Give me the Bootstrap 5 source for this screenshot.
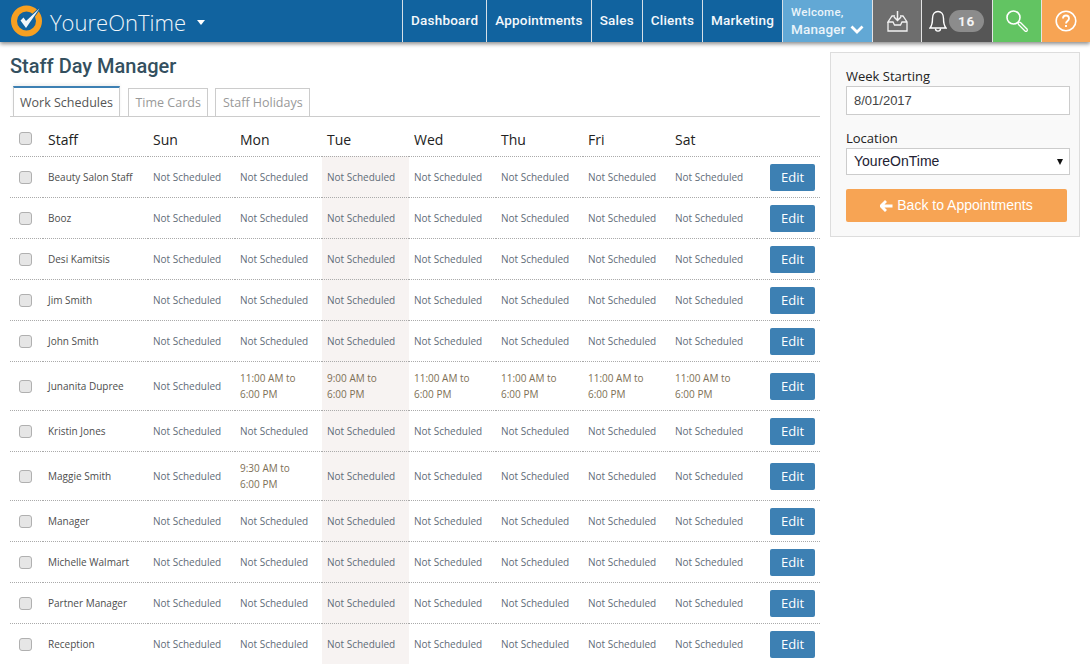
<!DOCTYPE html>
<html lang="en">
<head>
<meta charset="utf-8">
<title>Staff Day Manager</title>
<link href="https://cdn.jsdelivr.net/npm/bootstrap@5.3.0/dist/css/bootstrap.min.css" rel="stylesheet">
<style>
html,body{height:664px;overflow:hidden;}
body{font-family:"Open Sans",sans-serif;background:#fff;color:#333;}
.topbar{height:42px;background:#11639f;box-shadow:0 2px 4px rgba(0,0,0,.45);position:relative;z-index:2;}
.brand-logo{margin-left:9px;margin-right:5px;}
.brand-name{font-family:"Open Sans",sans-serif;font-weight:300;font-size:22px;color:#f0f6fa;line-height:42px;padding-top:1px;}
.brand-caret{border-left:4.5px solid transparent;border-right:4.5px solid transparent;border-top:5px solid #fff;margin-left:11px;margin-top:2px;}
.tb-link{font-family:"Roboto",sans-serif;font-weight:500;font-size:13.5px;letter-spacing:.2px;color:#f4f8fb;border-left:1px solid #d5e0e8;height:42px;line-height:40px;padding:0 8px;text-decoration:none;}
.tb-welcome{width:90px;background:#62a8d5;border-left:1px solid #d5e0e8;color:#eaf4fa;font-family:"Roboto",sans-serif;font-weight:500;line-height:1;padding:7px 0 0 8px;}
.tb-welcome .w1{font-size:11.5px;letter-spacing:.3px;}
.tb-welcome .w2{font-size:13.5px;letter-spacing:.15px;margin-top:4px;}
.tb-cell{height:42px;border-left:1px solid #e4e4e4;}
.tb-inbox{width:49px;background:#6e6e6e;}
.tb-bell{width:71px;background:#565656;padding-left:7px;gap:2px;}
.tb-search{width:49px;background:#62c462;}
.tb-help{width:49px;background:#f7a454;}
.bell-count{background:#8c8c8c;color:#f4f4f4;font-family:"Roboto",sans-serif;font-weight:700;font-size:13.5px;letter-spacing:.8px;width:35px;height:22px;line-height:22px;border-radius:11px;text-align:center;}
.page-title{font-family:"Roboto",sans-serif;font-size:20px;font-weight:500;color:#34505f;line-height:27px;margin:0;}
.main-col{width:810px;padding-top:11px;margin-left:10px;}
.side-col{width:250px;margin-left:10px;margin-top:10px;}
.tabs-bar{height:31px;margin-top:6px;border-bottom:1px solid #ccc;padding-left:3px;}
.tab-item{display:block;font-size:12.5px;color:#999;border:1px solid #ccc;border-bottom:0;height:28px;line-height:27px;padding:0 6.5px;margin-right:7px;margin-top:2px;text-decoration:none;background:#fff;}
.tab-item.on{color:#555;height:30px;line-height:30px;padding:0 6px;margin-top:0;border-top:2px solid #3d80b3;margin-bottom:-1px;margin-right:8px;box-shadow:0 -2px 3px rgba(0,0,0,.06);}
.sched{width:810px;table-layout:fixed;border-collapse:collapse;margin:0;}
.sched th,.sched td{padding:1px 5px 0;border-bottom:1px dotted #aaa;vertical-align:middle;}
.sched th{height:39px;padding-top:6px;font-size:14px;font-weight:400;color:#222;}
.sched td{height:41px;font-size:10px;line-height:16px;color:#5f6c78;}
.sched tr.taller td{height:49px;}
.sched td.who{color:#4d4d4d;}
.sched .now{background:#f7f3f2;}
.sched td.hrs{color:#7d6f55;}
.c1{width:33px;}
.c2{width:105px;}
.c3{width:87px;}
.tick{display:block;width:13px;height:13px;margin:0 0 0 4px;background:#e6e6e6;border:1px solid #b0b0b0;border-radius:3px;appearance:none;}
th .tick{margin-top:-1px;}
.edit-btn{display:block;width:45px;height:27px;line-height:27px;padding:0;margin:1px 0 0 8px;background:#3d80b3;color:#fff;border:0;border-radius:2px;font-family:"Open Sans",sans-serif;font-size:13px;}
.panel{height:185px;background:#f9f9f9;border:1px solid #ddd;padding:14px 15px 15px;}
.panel label{display:block;font-size:13px;color:#222;line-height:18px;margin:0;}
.field{display:block;width:224px;background:#fff;border:1px solid #ccc;border-radius:0;font-family:"Liberation Sans",sans-serif;font-size:14px;color:#444;}
.field-in{height:29px;line-height:27px;padding:0 7px;margin-top:1px;margin-bottom:14px;font-size:13px;}
.field-sel{height:27px;line-height:25px;padding:0 6px 0 7px;color:#223;display:flex;justify-content:space-between;align-items:center;margin-top:1px;}
.sel-arrow{border-left:3.500px solid transparent;border-right:3.500px solid transparent;border-top:6px solid #111;}
.back-btn{display:block;width:221px;height:33px;margin-top:14px;padding:0;background:#f7a454;color:#fff;border:0;border-radius:2px;font-family:"Liberation Sans",sans-serif;font-size:14px;}
</style>
</head>
<body>
<header class="topbar d-flex align-items-stretch">
  <div class="d-flex align-items-center flex-grow-1">
    <svg class="brand-logo" width="36" height="36" viewBox="0 0 36 36">
      <circle cx="17.500" cy="18" r="12.500" fill="none" stroke="#f7a021" stroke-width="6"/>
      <path d="M11.500 17.500L14.500 14.500L17 18L30.500 5.500L17 25Z" fill="#11639f" stroke="#11639f" stroke-width="2"/>
      <path d="M11.500 17.500L14.500 14.500L17 18L30.500 5.500L17 25Z" fill="#f2f6f9"/>
    </svg>
    <span class="brand-name">YoureOnTime</span>
    <span class="brand-caret"></span>
  </div>
  <a class="tb-link" href="#">Dashboard</a>
  <a class="tb-link" href="#">Appointments</a>
  <a class="tb-link" href="#">Sales</a>
  <a class="tb-link" href="#">Clients</a>
  <a class="tb-link" href="#">Marketing</a>
  <div class="tb-welcome">
    <div class="w1">Welcome,</div>
    <div class="w2 d-flex align-items-center">Manager
      <svg class="ms-1" width="14" height="9" viewBox="0 0 14 9"><path d="M1.500 1.500L7 7l5.500-5.500" fill="none" stroke="#fff" stroke-width="2.800"/></svg>
    </div>
  </div>
  <div class="tb-cell tb-inbox d-flex align-items-center justify-content-center">
    <svg width="21" height="22" viewBox="0 0 21 22" fill="none" stroke="#f2f2f2" stroke-width="1.300">
      <path d="M1 12v9h19v-9l-4-6h-3M8 6H5l-4 6h5l1.500 3h6l1.500-3h5"/>
      <path d="M10.500 1v9.500M7 7l3.500 3.500L14 7" stroke-width="1.500"/>
    </svg>
  </div>
  <div class="tb-cell tb-bell d-flex align-items-center">
    <svg width="18" height="23" viewBox="0 0 18 23" fill="none" stroke="#fff" stroke-width="1.400">
      <path d="M1 18c2.500-3 2.500-6 2.500-9.500C3.500 4 6 1.500 9 1.500s5.500 2.500 5.500 7c0 3.500 0 6.500 2.500 9.500z"/>
      <path d="M6.500 18.500c0 3.500 5 3.500 5 0"/>
    </svg>
    <span class="bell-count">16</span>
  </div>
  <div class="tb-cell tb-search d-flex align-items-center justify-content-center">
    <svg width="24" height="24" viewBox="0 0 24 24" fill="none">
      <circle cx="8.500" cy="8.500" r="6.500" stroke="#fff" stroke-width="1.600"/>
      <path d="M14.500 14.500l6.500 6.500" stroke="#fff" stroke-width="4" stroke-linecap="round"/>
      <path d="M14.500 14.500l6.500 6.500" stroke="#62c462" stroke-width="1.500" stroke-linecap="round"/>
    </svg>
  </div>
  <div class="tb-cell tb-help d-flex align-items-center justify-content-center">
    <svg width="22" height="22" viewBox="0 0 22 22" fill="none" stroke="#fff" stroke-width="1.600">
      <circle cx="11" cy="11" r="9.800"/>
      <path d="M8 8.500c0-4 6-4 6 0 0 2.500-3 2.500-3 5" stroke-width="1.800"/>
      <path d="M11 15v2" stroke-width="1.900"/>
    </svg>
  </div>
</header>

<div class="d-flex">
  <main class="main-col">
    <h1 class="page-title">Staff Day Manager</h1>
    <nav class="tabs-bar d-flex align-items-start">
      <a class="tab-item on" href="#">Work Schedules</a>
      <a class="tab-item" href="#">Time Cards</a>
      <a class="tab-item" href="#">Staff Holidays</a>
    </nav>
    <table class="sched">
      <colgroup><col class="c1"><col class="c2"><col class="c3"><col class="c3"><col class="c3"><col class="c3"><col class="c3"><col class="c3"><col class="c3"><col></colgroup>
      <thead><tr><th><input class="tick" type="checkbox"></th><th>Staff</th><th>Sun</th><th>Mon</th><th>Tue</th><th>Wed</th><th>Thu</th><th>Fri</th><th>Sat</th><th></th></tr></thead>
      <tbody>
        <tr><td><input class="tick" type="checkbox"></td><td class="who">Beauty Salon Staff</td><td>Not Scheduled</td><td>Not Scheduled</td><td class="now">Not Scheduled</td><td>Not Scheduled</td><td>Not Scheduled</td><td>Not Scheduled</td><td>Not Scheduled</td><td><button class="edit-btn" type="button">Edit</button></td></tr>
        <tr><td><input class="tick" type="checkbox"></td><td class="who">Booz</td><td>Not Scheduled</td><td>Not Scheduled</td><td class="now">Not Scheduled</td><td>Not Scheduled</td><td>Not Scheduled</td><td>Not Scheduled</td><td>Not Scheduled</td><td><button class="edit-btn" type="button">Edit</button></td></tr>
        <tr><td><input class="tick" type="checkbox"></td><td class="who">Desi Kamitsis</td><td>Not Scheduled</td><td>Not Scheduled</td><td class="now">Not Scheduled</td><td>Not Scheduled</td><td>Not Scheduled</td><td>Not Scheduled</td><td>Not Scheduled</td><td><button class="edit-btn" type="button">Edit</button></td></tr>
        <tr><td><input class="tick" type="checkbox"></td><td class="who">Jim Smith</td><td>Not Scheduled</td><td>Not Scheduled</td><td class="now">Not Scheduled</td><td>Not Scheduled</td><td>Not Scheduled</td><td>Not Scheduled</td><td>Not Scheduled</td><td><button class="edit-btn" type="button">Edit</button></td></tr>
        <tr><td><input class="tick" type="checkbox"></td><td class="who">John Smith</td><td>Not Scheduled</td><td>Not Scheduled</td><td class="now">Not Scheduled</td><td>Not Scheduled</td><td>Not Scheduled</td><td>Not Scheduled</td><td>Not Scheduled</td><td><button class="edit-btn" type="button">Edit</button></td></tr>
        <tr class="taller"><td><input class="tick" type="checkbox"></td><td class="who">Junanita Dupree</td><td>Not Scheduled</td><td class="hrs">11:00 AM to<br>6:00 PM</td><td class="now hrs">9:00 AM to<br>6:00 PM</td><td class="hrs">11:00 AM to<br>6:00 PM</td><td class="hrs">11:00 AM to<br>6:00 PM</td><td class="hrs">11:00 AM to<br>6:00 PM</td><td class="hrs">11:00 AM to<br>6:00 PM</td><td><button class="edit-btn" type="button">Edit</button></td></tr>
        <tr><td><input class="tick" type="checkbox"></td><td class="who">Kristin Jones</td><td>Not Scheduled</td><td>Not Scheduled</td><td class="now">Not Scheduled</td><td>Not Scheduled</td><td>Not Scheduled</td><td>Not Scheduled</td><td>Not Scheduled</td><td><button class="edit-btn" type="button">Edit</button></td></tr>
        <tr class="taller"><td><input class="tick" type="checkbox"></td><td class="who">Maggie Smith</td><td>Not Scheduled</td><td class="hrs">9:30 AM to<br>6:00 PM</td><td class="now">Not Scheduled</td><td>Not Scheduled</td><td>Not Scheduled</td><td>Not Scheduled</td><td>Not Scheduled</td><td><button class="edit-btn" type="button">Edit</button></td></tr>
        <tr><td><input class="tick" type="checkbox"></td><td class="who">Manager</td><td>Not Scheduled</td><td>Not Scheduled</td><td class="now">Not Scheduled</td><td>Not Scheduled</td><td>Not Scheduled</td><td>Not Scheduled</td><td>Not Scheduled</td><td><button class="edit-btn" type="button">Edit</button></td></tr>
        <tr><td><input class="tick" type="checkbox"></td><td class="who">Michelle Walmart</td><td>Not Scheduled</td><td>Not Scheduled</td><td class="now">Not Scheduled</td><td>Not Scheduled</td><td>Not Scheduled</td><td>Not Scheduled</td><td>Not Scheduled</td><td><button class="edit-btn" type="button">Edit</button></td></tr>
        <tr><td><input class="tick" type="checkbox"></td><td class="who">Partner Manager</td><td>Not Scheduled</td><td>Not Scheduled</td><td class="now">Not Scheduled</td><td>Not Scheduled</td><td>Not Scheduled</td><td>Not Scheduled</td><td>Not Scheduled</td><td><button class="edit-btn" type="button">Edit</button></td></tr>
        <tr><td><input class="tick" type="checkbox"></td><td class="who">Reception</td><td>Not Scheduled</td><td>Not Scheduled</td><td class="now">Not Scheduled</td><td>Not Scheduled</td><td>Not Scheduled</td><td>Not Scheduled</td><td>Not Scheduled</td><td><button class="edit-btn" type="button">Edit</button></td></tr>
      </tbody>
    </table>
  </main>
  <aside class="side-col">
    <div class="panel">
      <label>Week Starting</label>
      <div class="field field-in">8/01/2017</div>
      <label>Location</label>
      <div class="field field-sel"><span>YoureOnTime</span><span class="sel-arrow"></span></div>
      <button class="back-btn" type="button"><svg width="13" height="12" viewBox="0 0 13 12" class="me-1"><path d="M6 1L1 6l5 5M1.500 6H12.500" fill="none" stroke="#fff" stroke-width="2.800"/></svg>Back to Appointments</button>
    </div>
  </aside>
</div>
<script src="https://cdn.jsdelivr.net/npm/bootstrap@5.3.0/dist/js/bootstrap.bundle.min.js"></script>
</body>
</html>
